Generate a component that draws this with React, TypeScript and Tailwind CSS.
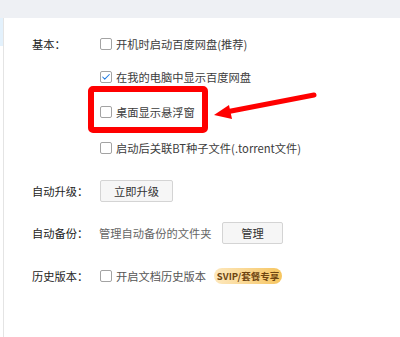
import { Check } from "lucide-react";

const font = { fontFamily: '"Noto Sans CJK SC", "Noto Sans", sans-serif' };

function Checkbox({ checked = false }: { checked?: boolean }) {
    return (
        <span className="flex h-[12px] w-[12px] shrink-0 items-center justify-center rounded-[2px] border border-[#a3a3a3] bg-white">
            {checked && <Check className="h-[10px] w-[10px] text-[#1f7ae0]" strokeWidth={2.5} />}
        </span>
    );
}

function Option({ label, checked, className }: { label: string; checked?: boolean; className?: string }) {
    return (
        <div className={`flex h-[20px] items-center gap-[4px] ${className ?? ""}`}>
            <Checkbox checked={checked} />
            <span className="text-[11.25px] text-[#3c3c3c]">{label}</span>
        </div>
    );
}

function GrayButton({ children, width }: { children: string; width: string }) {
    return (
        <button
            className={`flex h-[22px] ${width} items-center justify-center rounded-[2px] border border-[#d4d4d4] bg-[#f6f6f6] text-[11.25px] text-[#333]`}
        >
            {children}
        </button>
    );
}

export default function App() {
    return (
        <div className="relative flex h-[337px] w-[400px] flex-col overflow-hidden bg-white" style={font}>
            <div className="h-[18px] shrink-0 bg-[#eef0f4]" />
            <div className="flex flex-1">
                <div className="flex w-[4px] flex-col border-r border-[#e4e4e4]">
                    <div className="h-[28px] bg-[#e3f1fc]" />
                </div>

                <div className="flex flex-col pl-[28px] pt-[16px]">
                    {/* 基本 */}
                    <div className="flex">
                        <div className="flex h-[20px] w-[68px] items-center text-[11.25px] text-[#222]">基本：</div>
                        <div className="flex flex-col">
                            <Option label="开机时启动百度网盘(推荐)" />
                            <Option label="在我的电脑中显示百度网盘" checked className="mt-[13px]" />
                            <Option label="桌面显示悬浮窗" className="mt-[15px]" />
                            <Option label="启动后关联BT种子文件(.torrent文件)" className="mt-[16px]" />
                        </div>
                    </div>

                    {/* 自动升级 */}
                    <div className="mt-[22px] flex h-[22px] items-center">
                        <div className="w-[68px] text-[11.25px] text-[#222]">自动升级：</div>
                        <GrayButton width="w-[73px]">立即升级</GrayButton>
                    </div>

                    {/* 自动备份 */}
                    <div className="mt-[20px] flex h-[22px] items-center">
                        <div className="w-[67px] text-[11.25px] text-[#222]">自动备份：</div>
                        <span className="w-[123px] text-[11.25px] text-[#666]">管理自动备份的文件夹</span>
                        <GrayButton width="w-[61px]">管理</GrayButton>
                    </div>

                    {/* 历史版本 */}
                    <div className="mt-[21px] flex h-[22px] items-center">
                        <div className="w-[68px] text-[11.25px] text-[#222]">历史版本：</div>
                        <Checkbox />
                        <span className="ml-[4px] text-[11.25px] text-[#555]">开启文档历史版本</span>
                        <span className="ml-[8px] flex h-[16px] w-[68px] items-center justify-center rounded-full bg-gradient-to-r from-[#fde8bd] to-[#f6c55e] text-[9.5px] font-bold text-[#6e4511]">
                            SVIP/套餐专享
                        </span>
                    </div>
                </div>
            </div>

            {/* annotation */}
            <div className="absolute left-[88px] top-[86px] h-[47px] w-[120px] rounded-[5px] border-[6px] border-[#ff0000]" />
            <svg className="pointer-events-none absolute left-0 top-0" width="400" height="337" viewBox="0 0 400 337">
                <line x1="314" y1="95" x2="226" y2="112" stroke="#ff0000" strokeWidth="5" strokeLinecap="round" />
                <polygon points="214,115 229,105 232,119" fill="#ff0000" />
            </svg>
        </div>
    );
}
